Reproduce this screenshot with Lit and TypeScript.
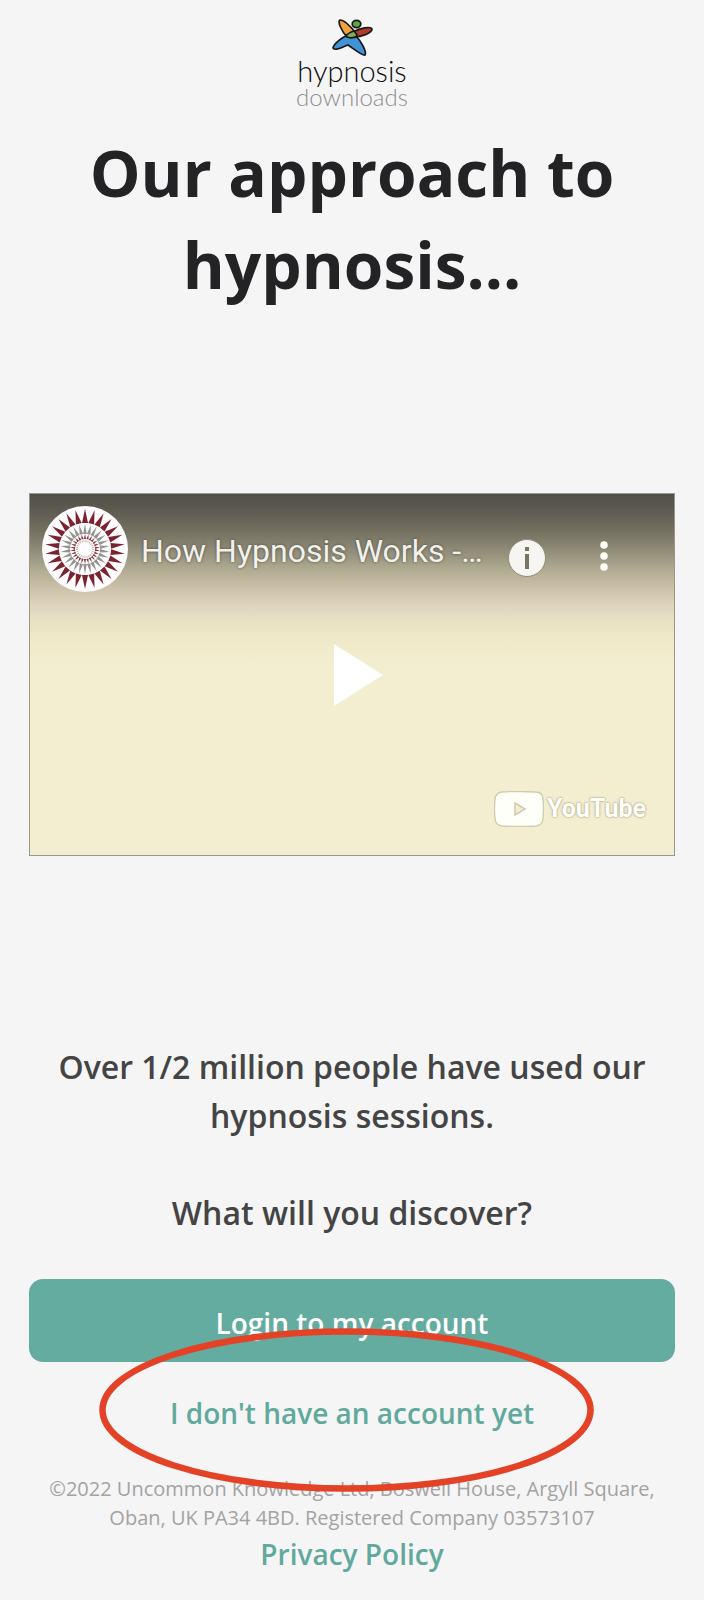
import { LitElement, html, svg, css } from "lit";
import { customElement } from "lit/decorators.js";

/** A ring of thin wedges pointing outwards around the origin. */
function spikes(count: number, inner: number, outer: number, half: number, fill: string) {
  return Array.from({ length: count }, (_, i) => svg`
    <path d="M${-half} ${-inner} L0 ${-outer} L${half} ${-inner} Z"
      fill=${fill} transform="rotate(${(i * 360) / count})"></path>`);
}

@customElement("brand-logo")
class BrandLogo extends LitElement {
  static styles = css`
    :host { display: flex; flex-direction: column; align-items: center; font-family: Lato, sans-serif; font-weight: 300; }
    .mark { display: block; width: 42px; height: 38px; }
    .name { font-size: 29px; line-height: 28px; color: #0d0d0d; }
    .sub { font-size: 24px; line-height: 24px; color: #8f8f8f; }
  `;
  render() {
    return html`
      <svg class="mark" viewBox="0 0 42 38" aria-hidden="true">
        <g stroke="#161616" stroke-width="1.7" stroke-linejoin="round">
          <path d="M17 16 C12 18 3 24 2 29 C3 32 10 29 17 26 C22 29 31 37 34 36 C36 33 30 22 25 17 Z" fill="#4193d6"></path>
          <path d="M16 18 C11 13 6 2 9 1 C13 1 20 8 25 14 Z" fill="#f0a23b"></path>
          <path d="M22 13 C29 9 40 7 41 10 C41 14 31 18 23 18 Z" fill="#b33a2b"></path>
          <path d="M15 17 C17 14 20 13 23 12 C25 14 26 16 26 17 C22 20 17 19 15 17 Z" fill="#78b159"></path>
          <ellipse cx="25.500" cy="5" rx="4.300" ry="3.600" fill="#5fa544"></ellipse>
        </g>
      </svg>
      <span class="name">hypnosis</span>
      <span class="sub">downloads</span>
    `;
  }
}

@customElement("video-card")
class VideoCard extends LitElement {
  static styles = css`
    :host {
      display: grid; box-sizing: border-box; aspect-ratio: 16 / 9; border: 1px solid #99978a;
      font-family: Roboto, sans-serif; text-align: left;
      background: linear-gradient(#504e46 0%, #5f5c51 5%, #777463 11%, #928e7a 16%, #b0ab91 21%, #cbc1a8 26%, #ddd5bc 31%, #e7e1c3 35%, #efe9ca 40%, #f4eed0 48%, #f4eed0 100%);
    }
    :host > * { grid-area: 1 / 1; }
    button { padding: 0; border: 0; background: none; cursor: pointer; }
    svg { display: block; }
    .bar { align-self: start; display: flex; align-items: center; padding: 11px 60px 0 11px; min-width: 0; }
    .avatar { width: 88px; height: 88px; flex: none; }
    .title {
      flex: 1; min-width: 0; padding: 4px 0 0 12px; font-size: 32px; line-height: 48px; color: #f2f1ec;
      text-decoration: none; white-space: nowrap; text-shadow: 0 0 3px rgba(0, 0, 0, 0.5);
    }
    .tools { display: flex; align-items: center; gap: 48px; padding-top: 18px; }
    .play { place-self: center; }
    .brand {
      place-self: end; display: flex; align-items: center; gap: 3px; margin: 0 28px 27px 0; color: #fffffa;
      text-decoration: none; font-size: 25px; line-height: 38px; font-weight: 700;
      text-shadow: 0 0 2px #aaa68c, 0 0 2px #aaa68c;
    }
  `;
  render() {
    return html`
      <div class="bar">
        <svg class="avatar" viewBox="-44 -44 88 88" role="img" aria-label="Channel picture">
          <circle r="43" fill="#fffdfd"></circle>
          ${spikes(26, 26, 40, 3, "#7b2430")}
          ${spikes(26, 15, 25, 1.8, "#92938f")}
          ${spikes(26, 10, 15, 1.1, "#8c3541")}
          <circle r="8" fill="none" stroke="#b9b9b6" stroke-width="2" stroke-dasharray="1 1"></circle>
        </svg>
        <a class="title" href="#video">How Hypnosis Works -…</a>
        <div class="tools">
          <button aria-label="Info">
            <svg width="38" height="38" viewBox="0 0 38 38">
              <circle cx="19" cy="19" r="18.500" fill="#f6f5f1" stroke="#8f8c7b" stroke-width="1"></circle>
              <path d="M17 8h4v4h-4zM17 15h4v15h-4z" fill="#777566"></path>
            </svg>
          </button>
          <button aria-label="More">
            <svg width="20" height="38" viewBox="0 0 20 38" fill="#fdfcf8">
              <circle cx="10" cy="6" r="3.800"></circle><circle cx="10" cy="17" r="3.800"></circle><circle cx="10" cy="28" r="3.800"></circle>
            </svg>
          </button>
        </div>
      </div>
      <button class="play" aria-label="Play">
        <svg width="64" height="64" viewBox="0 0 64 64"><path d="M14 1 L63 32 L14 63 Z" fill="#fff"></path></svg>
      </button>
      <a class="brand" href="#youtube">
        <svg width="50" height="36" viewBox="0 0 50 36" fill="#fffffa" stroke="#cfcbae" aria-hidden="true">
          <path d="M8 1 Q25 0 42 1 Q49 1 49 9 Q50 18 49 27 Q49 34 42 35 Q25 36 8 35 Q1 34 1 27 Q0 18 1 9 Q1 2 8 1 Z" stroke-width="1.300"></path>
          <path d="M21 12 L31 18 L21 24 Z" fill="#f4eed0" stroke-width="1.500"></path>
        </svg>
        <span>YouTube</span>
      </a>
    `;
  }
}

@customElement("app-root")
class AppRoot extends LitElement {
  static styles = css`
    :host {
      display: block; min-height: 100vh; box-sizing: border-box; padding: 19px 29px 0;
      background: #f5f5f5; color: #444445; font-family: "Open Sans", sans-serif; text-align: center;
    }
    h1 { margin: 18px 0 0; color: #232325; font-size: 64px; line-height: 92px; font-weight: 700; }
    p { margin: 0; }
    video-card { margin-top: 182px; }
    .message { display: grid; gap: 48px; margin-top: 186px; font-size: 32px; line-height: 49px; font-weight: 600; }
    .actions { position: relative; display: grid; margin-top: 42px; }
    .login, .signup { font-family: inherit; font-size: 28px; line-height: 38px; font-weight: 600; cursor: pointer; border: 0; }
    .login { padding: 25px 16px 20px; border-radius: 14px; background: #65aca0; color: #fff; }
    .signup { justify-self: center; margin-top: 32px; padding: 0; background: none; color: #60a99c; }
    .ring { position: absolute; left: 70px; top: 49px; width: 495px; height: 164px; pointer-events: none; }
    footer { margin-top: 42px; font-size: 20px; line-height: 29px; color: #a3a3a3; }
    .policy { display: inline-block; font-size: 28px; line-height: 44px; font-weight: 600; color: #60a99c; text-decoration: none; }
  `;
  render() {
    return html`
      <brand-logo></brand-logo>
      <h1>Our approach to hypnosis...</h1>
      <video-card></video-card>
      <div class="message">
        <p>Over 1/2 million people have used our hypnosis sessions.</p>
        <p>What will you discover?</p>
      </div>
      <div class="actions">
        <button class="login">Login to my account</button>
        <button class="signup">I don't have an account yet</button>
        <svg class="ring" viewBox="0 0 495 164" aria-hidden="true">
          <ellipse cx="247.500" cy="82" rx="244" ry="78.500" fill="none" stroke="#e44227" stroke-width="6.500"></ellipse>
        </svg>
      </div>
      <footer>
        <p>©2022 Uncommon Knowledge Ltd, Boswell House, Argyll Square, Oban, UK PA34 4BD. Registered Company 03573107</p>
        <a class="policy" href="#privacy">Privacy Policy</a>
      </footer>
    `;
  }
}
